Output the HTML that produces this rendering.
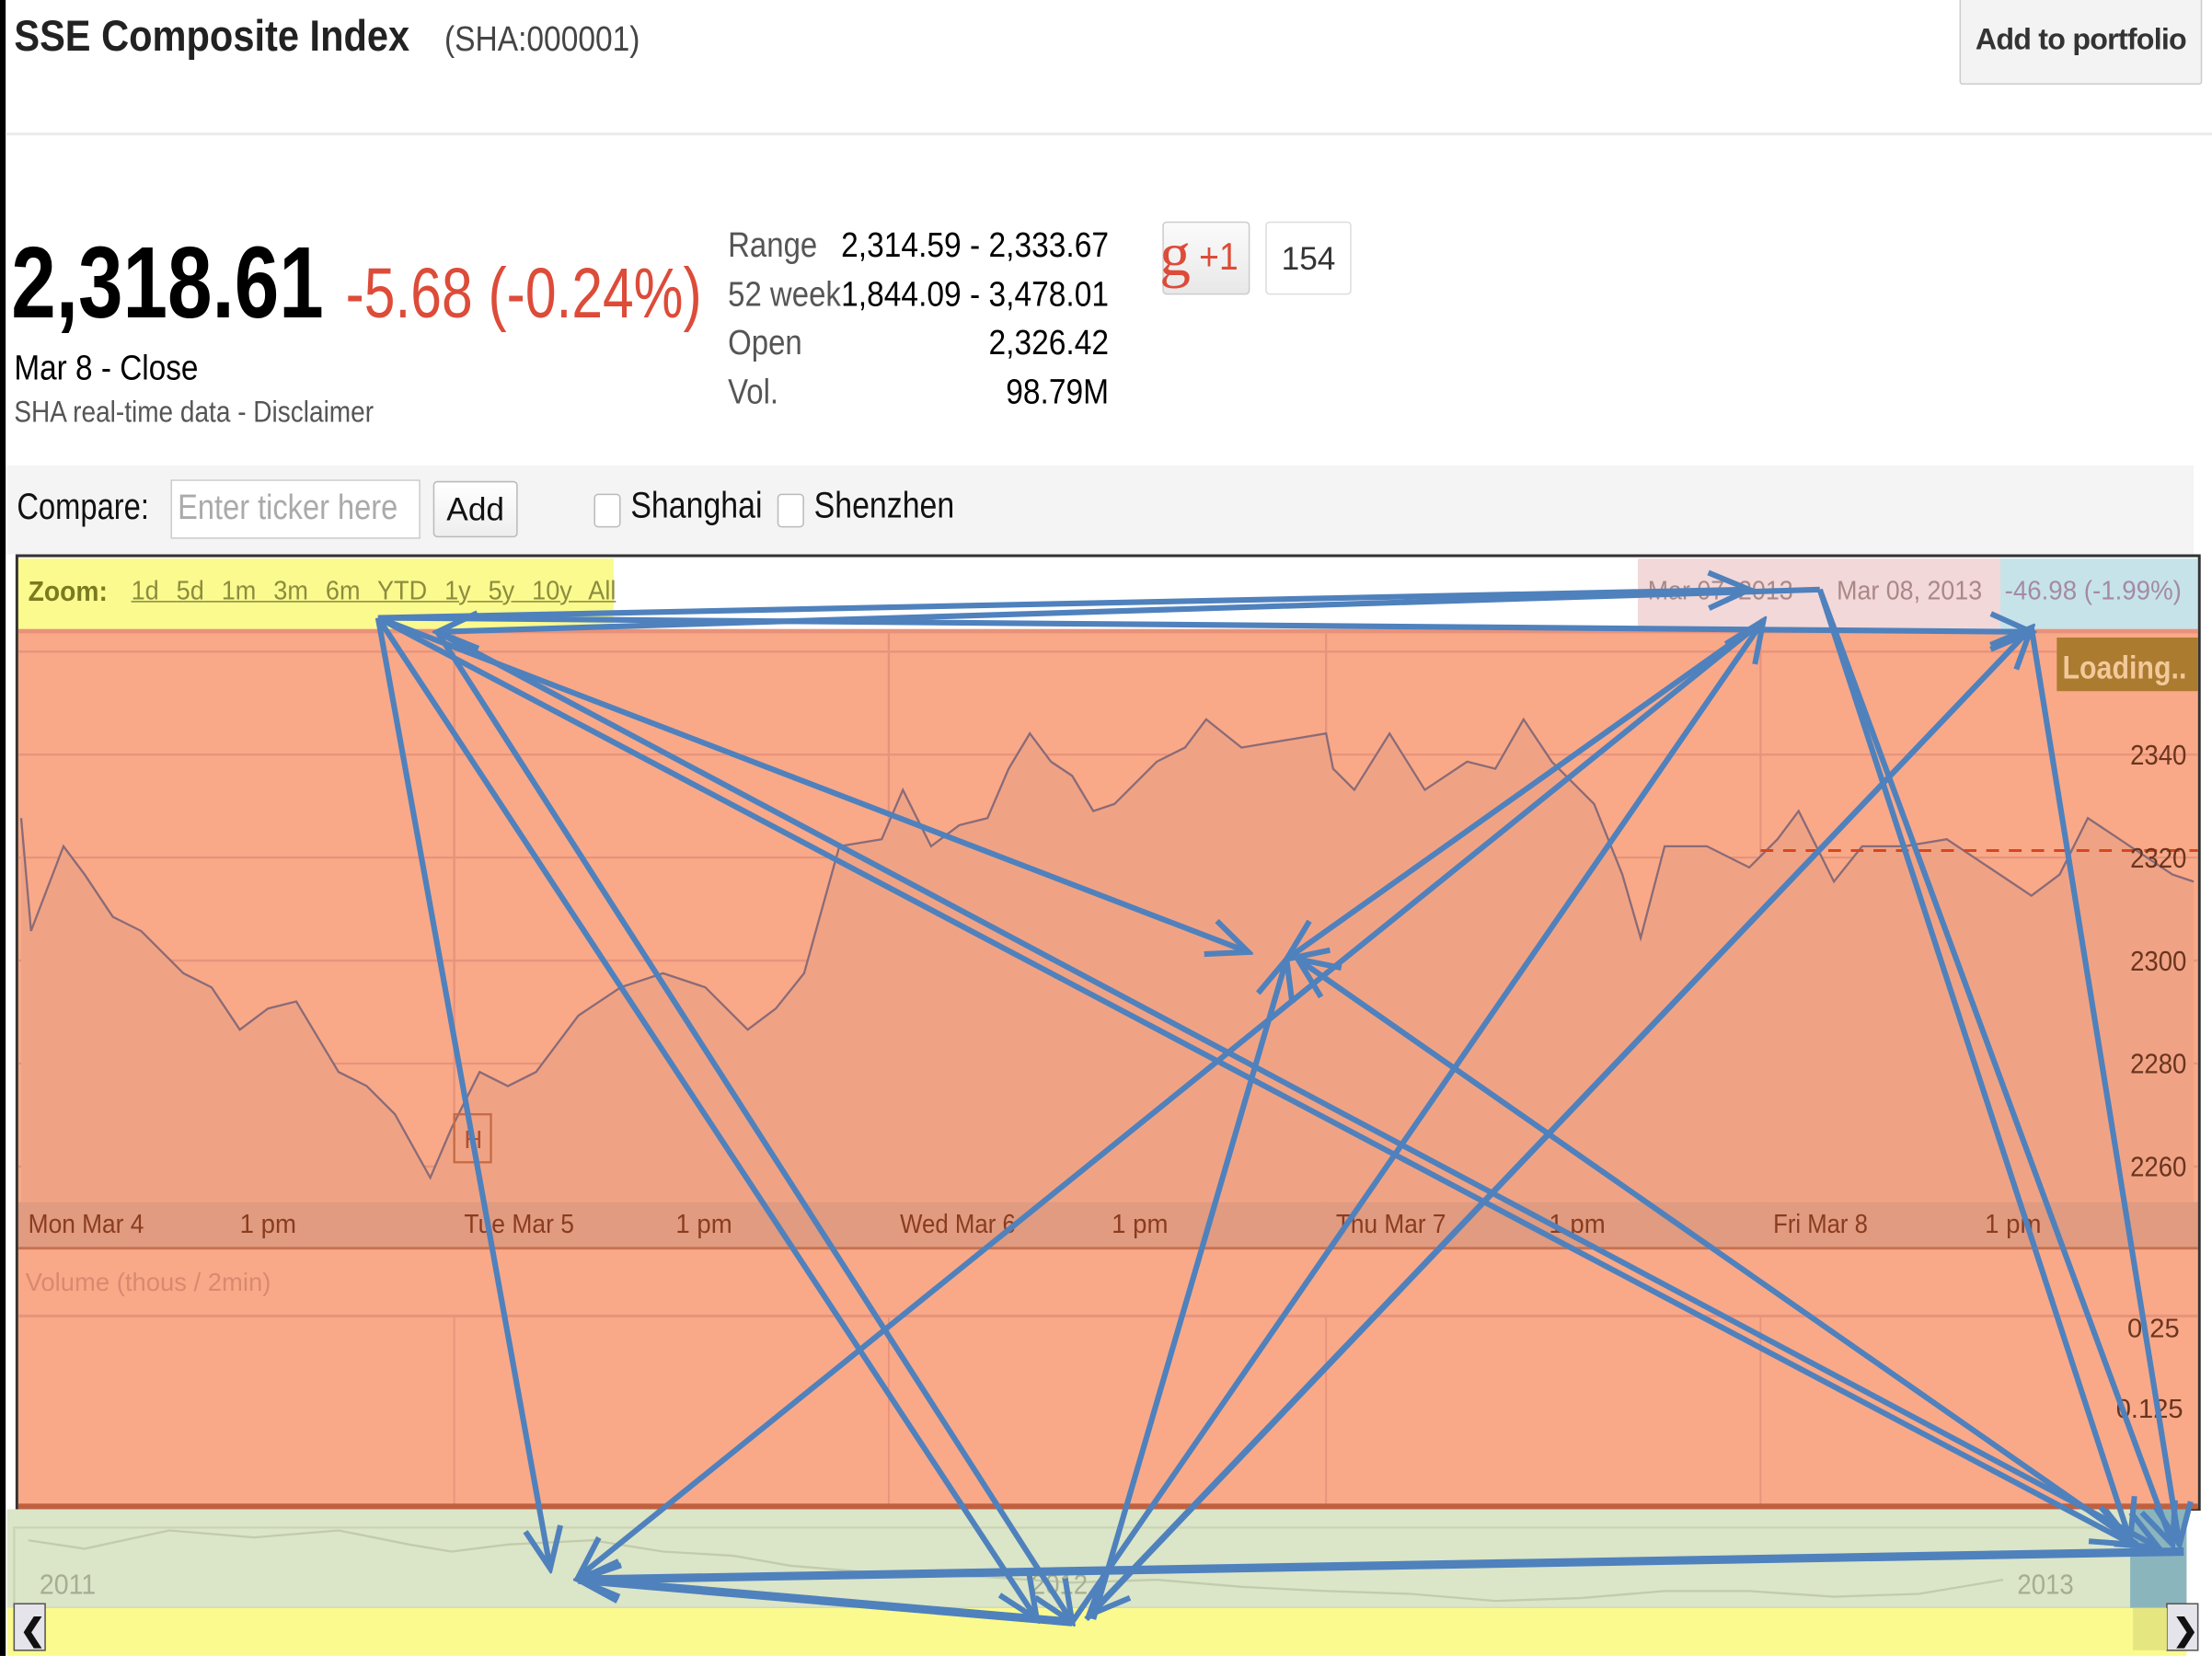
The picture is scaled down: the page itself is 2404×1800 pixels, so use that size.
<!DOCTYPE html>
<html><head><meta charset="utf-8">
<style>
html,body{margin:0;padding:0;background:#fff;overflow:hidden}
body{width:2404px;height:1800px;position:relative}
#w{position:absolute;left:0;top:0;width:1568px;height:1174px;transform:scale(1.53316);transform-origin:0 0;font-family:"Liberation Sans",sans-serif;color:#222}
.a{position:absolute;white-space:nowrap}
.n{transform-origin:0 0}
</style></head><body><div id="w">
<div class="a" style="left:0;top:0;width:4px;height:1174px;background:#000"></div>
<div class="a n" style="left:10px;top:8px;font-size:31px;font-weight:bold;color:#222;transform:scaleX(.875)">SSE Composite Index</div>
<div class="a n" style="left:315px;top:14px;font-size:25px;color:#444;transform:scaleX(.875)">(SHA:000001)</div>
<div class="a" style="left:1389px;top:-4px;width:172px;height:64px;border:1px solid #ccc;border-radius:2px;background:#f3f3f3;box-sizing:border-box;font-size:21px;font-weight:bold;color:#333;text-align:center;line-height:64px;letter-spacing:-0.5px">Add to portfolio</div>
<div class="a" style="left:4px;top:94px;width:1564px;height:2px;background:#ebebeb"></div>

<div class="a n" style="left:8px;top:160px;font-size:72px;font-weight:bold;color:#000;transform:scaleX(.79)">2,318.61</div>
<div class="a n" style="left:245px;top:179px;font-size:50px;color:#dd4b39;transform:scaleX(.79)">-5.68 (-0.24%)</div>
<div class="a n" style="left:10px;top:247px;font-size:25px;color:#000;transform:scaleX(.87)">Mar 8 - Close</div>
<div class="a n" style="left:10px;top:281px;font-size:21px;color:#555;transform:scaleX(.87)">SHA real-time data - Disclaimer</div>

<div class="a n" style="left:516px;top:157px;font-size:25px;color:#555;line-height:34.5px;transform:scaleX(.86)">Range<br>52 week<br>Open<br>Vol.</div>
<div class="a" style="left:560px;top:157px;width:226px;font-size:25px;color:#000;line-height:34.5px;text-align:right;transform:scaleX(.875);transform-origin:100% 0">2,314.59 - 2,333.67<br>1,844.09 - 3,478.01<br>2,326.42<br>98.79M</div>

<div class="a" style="left:824px;top:157px;width:62px;height:52px;border:1px solid #ccc;border-radius:3px;background:linear-gradient(#fbfbfb,#e8e8e8);box-sizing:border-box"></div>
<div class="a" style="left:822px;top:155px;font-size:44px;color:#dd4b39;font-family:'Liberation Serif',serif">g</div>
<div class="a n" style="left:850px;top:167px;font-size:27px;color:#dd4b39;transform:scaleX(.9)">+1</div>
<div class="a" style="left:897px;top:157px;width:61px;height:52px;border:1px solid #ddd;border-radius:3px;background:#fff;box-sizing:border-box;font-size:23px;color:#333;text-align:center;line-height:50px">154</div>

<div class="a" style="left:5px;top:330px;width:1550px;height:63px;background:#f4f4f4"></div>
<div class="a n" style="left:12px;top:344px;font-size:26px;color:#111;transform:scaleX(.82)">Compare:</div>
<div class="a" style="left:121px;top:340px;width:177px;height:42px;border:1px solid #ccc;background:#fff;box-sizing:border-box"></div>
<div class="a n" style="left:126px;top:346px;font-size:25px;color:#aaa;transform:scaleX(.85)">Enter ticker here</div>
<div class="a" style="left:307px;top:341px;width:60px;height:40px;border:1px solid #bbb;border-radius:3px;background:linear-gradient(#fff,#eee);box-sizing:border-box;font-size:23px;text-align:center;line-height:38px;color:#111">Add</div>
<div class="a" style="left:421px;top:350px;width:17px;height:22px;border:1px solid #bbb;border-radius:3px;background:#fff"></div>
<div class="a n" style="left:447px;top:343px;font-size:26px;color:#111;transform:scaleX(.85)">Shanghai</div>
<div class="a" style="left:551px;top:350px;width:17px;height:22px;border:1px solid #bbb;border-radius:3px;background:#fff"></div>
<div class="a n" style="left:577px;top:343px;font-size:26px;color:#111;transform:scaleX(.85)">Shenzhen</div>

<div class="a" style="left:11px;top:393px;width:1549px;height:678px;border:2px solid #333;box-sizing:border-box;background:#fff"></div>
<div class="a" style="left:13px;top:396px;width:422px;height:50px;background:#fafa8e"></div>
<div class="a n" style="left:20px;top:409px;font-size:20px;font-weight:bold;color:#7a7a20;transform:scaleX(.92)">Zoom:</div>
<div class="a n" style="left:93px;top:409px;font-size:19px;color:#8c8c40;text-decoration:underline;word-spacing:8px;transform:scaleX(.93)">1d <span style="text-decoration:none">5d</span> 1m 3m 6m YTD 1y 5y 10y All</div>
<div class="a" style="left:1161px;top:396px;width:257px;height:50px;background:#f2d8d8"></div>
<div class="a" style="left:1418px;top:396px;width:140px;height:50px;background:#c6e3ea"></div>
<div class="a n" style="left:1168px;top:409px;font-size:19px;color:#a88;transform:scaleX(.92)">Mar 07, 2013</div>
<div class="a n" style="left:1302px;top:409px;font-size:19px;color:#a88;transform:scaleX(.92)">Mar 08, 2013</div>
<div class="a n" style="left:1421px;top:409px;font-size:19px;color:#a58aa5;transform:scaleX(.95)">-46.98 (-1.99%)</div>

<svg class="a" style="left:0;top:0" width="1568" height="1174" viewBox="0 0 1568 1174">
<rect x="13" y="446" width="1545" height="406" fill="#f9a988"/>
<rect x="13" y="446" width="1545" height="3" fill="#e8927a"/>
<g stroke="#e8937c" stroke-width="1.5">
<line x1="13" x2="1558" y1="462" y2="462"/><line x1="13" x2="1558" y1="535" y2="535"/><line x1="13" x2="1558" y1="608" y2="608"/><line x1="13" x2="1558" y1="681" y2="681"/><line x1="13" x2="1558" y1="754" y2="754"/><line x1="13" x2="1558" y1="827" y2="827"/>
<line x1="322" x2="322" y1="449" y2="852"/><line x1="630" x2="630" y1="449" y2="852"/><line x1="940" x2="940" y1="449" y2="852"/><line x1="1248" x2="1248" y1="449" y2="852"/>
</g>
<polygon fill="#f0a384" points="15,580 22,660 45,600 60,620 80,650 100,660 130,690 150,700 170,730 190,715 210,710 240,760 260,770 280,790 305,835 320,800 340,760 360,770 380,760 410,720 440,700 470,690 500,700 530,730 550,715 570,690 595,600 625,595 640,560 660,600 680,585 700,580 715,545 730,520 745,540 760,550 775,575 790,570 820,540 840,530 855,510 880,530 910,525 940,520 945,545 960,560 985,520 1010,560 1040,540 1060,545 1080,510 1100,540 1130,570 1150,620 1163,665 1180,600 1210,600 1240,615 1260,595 1275,575 1300,625 1320,600 1350,600 1380,595 1410,615 1440,635 1460,620 1480,580 1510,600 1540,620 1555,625 1555,852 15,852"/>
<polyline fill="none" stroke="#8a6b78" stroke-width="1.5" points="15,580 22,660 45,600 60,620 80,650 100,660 130,690 150,700 170,730 190,715 210,710 240,760 260,770 280,790 305,835 320,800 340,760 360,770 380,760 410,720 440,700 470,690 500,700 530,730 550,715 570,690 595,600 625,595 640,560 660,600 680,585 700,580 715,545 730,520 745,540 760,550 775,575 790,570 820,540 840,530 855,510 880,530 910,525 940,520 945,545 960,560 985,520 1010,560 1040,540 1060,545 1080,510 1100,540 1130,570 1150,620 1163,665 1180,600 1210,600 1240,615 1260,595 1275,575 1300,625 1320,600 1350,600 1380,595 1410,615 1440,635 1460,620 1480,580 1510,600 1540,620 1555,625"/>
<line x1="1248" x2="1558" y1="603" y2="603" stroke="#d9461e" stroke-width="2" stroke-dasharray="9,7"/>
<rect x="322" y="790" width="26" height="34" fill="none" stroke="#c66a44" stroke-width="1.5"/>
<text x="329" y="814" font-size="18" fill="#b05030" font-family="Liberation Sans">H</text>
<rect x="1458" y="452" width="100" height="38" fill="#ab7b2f"/>
<text x="1462" y="481" font-size="23" font-weight="bold" fill="#f3c89a" font-family="Liberation Sans" textLength="88" lengthAdjust="spacingAndGlyphs">Loading..</text>
<g font-family="Liberation Sans" font-size="20" fill="#6a3520">
<text x="1510" y="542" textLength="40" lengthAdjust="spacingAndGlyphs">2340</text><text x="1510" y="615" textLength="40" lengthAdjust="spacingAndGlyphs">2320</text><text x="1510" y="688" textLength="40" lengthAdjust="spacingAndGlyphs">2300</text><text x="1510" y="761" textLength="40" lengthAdjust="spacingAndGlyphs">2280</text><text x="1510" y="834" textLength="40" lengthAdjust="spacingAndGlyphs">2260</text>
</g>
<rect x="13" y="852" width="1545" height="33" fill="#e09b80"/>
<rect x="13" y="884" width="1545" height="2" fill="#c77250"/>
<g font-family="Liberation Sans" font-size="19" fill="#8a3c20">
<text x="20" y="874" textLength="82" lengthAdjust="spacingAndGlyphs">Mon Mar 4</text><text x="170" y="874" textLength="40" lengthAdjust="spacingAndGlyphs">1 pm</text><text x="329" y="874" textLength="78" lengthAdjust="spacingAndGlyphs">Tue Mar 5</text><text x="479" y="874" textLength="40" lengthAdjust="spacingAndGlyphs">1 pm</text><text x="638" y="874" textLength="82" lengthAdjust="spacingAndGlyphs">Wed Mar 6</text><text x="788" y="874" textLength="40" lengthAdjust="spacingAndGlyphs">1 pm</text><text x="947" y="874" textLength="78" lengthAdjust="spacingAndGlyphs">Thu Mar 7</text><text x="1098" y="874" textLength="40" lengthAdjust="spacingAndGlyphs">1 pm</text><text x="1257" y="874" textLength="67" lengthAdjust="spacingAndGlyphs">Fri Mar 8</text><text x="1407" y="874" textLength="40" lengthAdjust="spacingAndGlyphs">1 pm</text>
</g>
<rect x="13" y="886" width="1545" height="182" fill="#f9a988"/>
<line x1="13" x2="1558" y1="933" y2="933" stroke="#e8937c" stroke-width="2"/>
<g stroke="#e8937c" stroke-width="1.2"><line x1="322" x2="322" y1="933" y2="1068"/><line x1="630" x2="630" y1="933" y2="1068"/><line x1="940" x2="940" y1="933" y2="1068"/><line x1="1248" x2="1248" y1="933" y2="1068"/></g>
<text x="18" y="915" font-family="Liberation Sans" font-size="18" fill="#d88a70" textLength="174" lengthAdjust="spacingAndGlyphs">Volume (thous / 2min)</text>
<text x="1508" y="948" font-family="Liberation Sans" font-size="19" fill="#6a3520">0.25</text>
<text x="1500" y="1005" font-family="Liberation Sans" font-size="19" fill="#6a3520">0.125</text>
<rect x="13" y="1066" width="1545" height="4" fill="#c06040"/>
<rect x="5" y="1070" width="1545" height="70" fill="#dbe5c8"/>
<rect x="10" y="1083" width="1530" height="57" fill="none" stroke="#cbd4b6" stroke-width="1.5"/>
<polyline fill="none" stroke="#c2cbac" stroke-width="1.5" points="20,1092 60,1098 120,1085 180,1090 240,1085 290,1095 320,1100 360,1095 420,1092 470,1100 520,1103 560,1110 620,1115 700,1118 760,1122 820,1120 880,1125 940,1128 1000,1130 1060,1135 1120,1133 1180,1128 1240,1128 1300,1132 1360,1130 1420,1120"/>
<text x="28" y="1130" font-family="Liberation Sans" font-size="20" fill="#a7ad92" textLength="40" lengthAdjust="spacingAndGlyphs">2011</text>
<text x="731" y="1130" font-family="Liberation Sans" font-size="20" fill="#a7ad92" textLength="40" lengthAdjust="spacingAndGlyphs">2012</text>
<text x="1430" y="1130" font-family="Liberation Sans" font-size="20" fill="#a7ad92" textLength="40" lengthAdjust="spacingAndGlyphs">2013</text>
<rect x="1510" y="1070" width="40" height="70" fill="#8bb5bd"/>
<rect x="5" y="1140" width="1545" height="34" fill="#fafa8e"/>
<rect x="10" y="1137" width="22" height="33" fill="#e4e4ea" stroke="#555" stroke-width="1"/>
<text x="14" y="1163" font-family="Liberation Sans" font-size="22" font-weight="bold" fill="#111">❮</text>
<rect x="1536" y="1137" width="22" height="33" fill="#e4e4ea" stroke="#555" stroke-width="1"/>
<text x="1540" y="1163" font-family="Liberation Sans" font-size="22" font-weight="bold" fill="#111">❯</text>
<rect x="1512" y="1140" width="24" height="30" fill="#e6e680"/>

<defs>
<marker id="M" viewBox="0 0 20 20" refX="18" refY="10" markerWidth="36" markerHeight="36" orient="auto" markerUnits="userSpaceOnUse"><path d="M2,3 L18,10 L2,17" fill="none" stroke="#4f81bd" stroke-width="2.2"/></marker></defs>
<g stroke="#4f81bd" stroke-width="4" fill="none" marker-end="url(#M)">
<line x1="268" y1="438" x2="1240" y2="418"/>
<line x1="268" y1="438" x2="1440" y2="448"/>
<line x1="1290" y1="418" x2="310" y2="448"/>
<line x1="268" y1="438" x2="390" y2="1112"/>
<line x1="268" y1="438" x2="735" y2="1148"/>
<line x1="268" y1="438" x2="885" y2="675"/>
<line x1="268" y1="438" x2="1512" y2="1095"/>
<line x1="310" y1="448" x2="760" y2="1150"/>
<line x1="310" y1="448" x2="1530" y2="1097"/>
<line x1="1250" y1="440" x2="410" y2="1118"/>
<line x1="1250" y1="440" x2="912" y2="680"/>
<line x1="1290" y1="418" x2="1510" y2="1092"/>
<line x1="1290" y1="418" x2="1540" y2="1095"/>
<line x1="1440" y1="445" x2="772" y2="1145"/>
<line x1="1440" y1="445" x2="1545" y2="1095"/>
<line x1="760" y1="1150" x2="1250" y2="440"/>
<line x1="775" y1="1148" x2="912" y2="680"/>
<line x1="1515" y1="1095" x2="920" y2="680"/>
<line x1="770" y1="1148" x2="1440" y2="445"/>
</g>
<g stroke="#4f81bd" stroke-width="6" fill="none" marker-end="url(#M)">
<line x1="1548" y1="1100" x2="410" y2="1120"/>
<line x1="760" y1="1150" x2="410" y2="1120"/>
</g>
</svg>
</div></body></html>
